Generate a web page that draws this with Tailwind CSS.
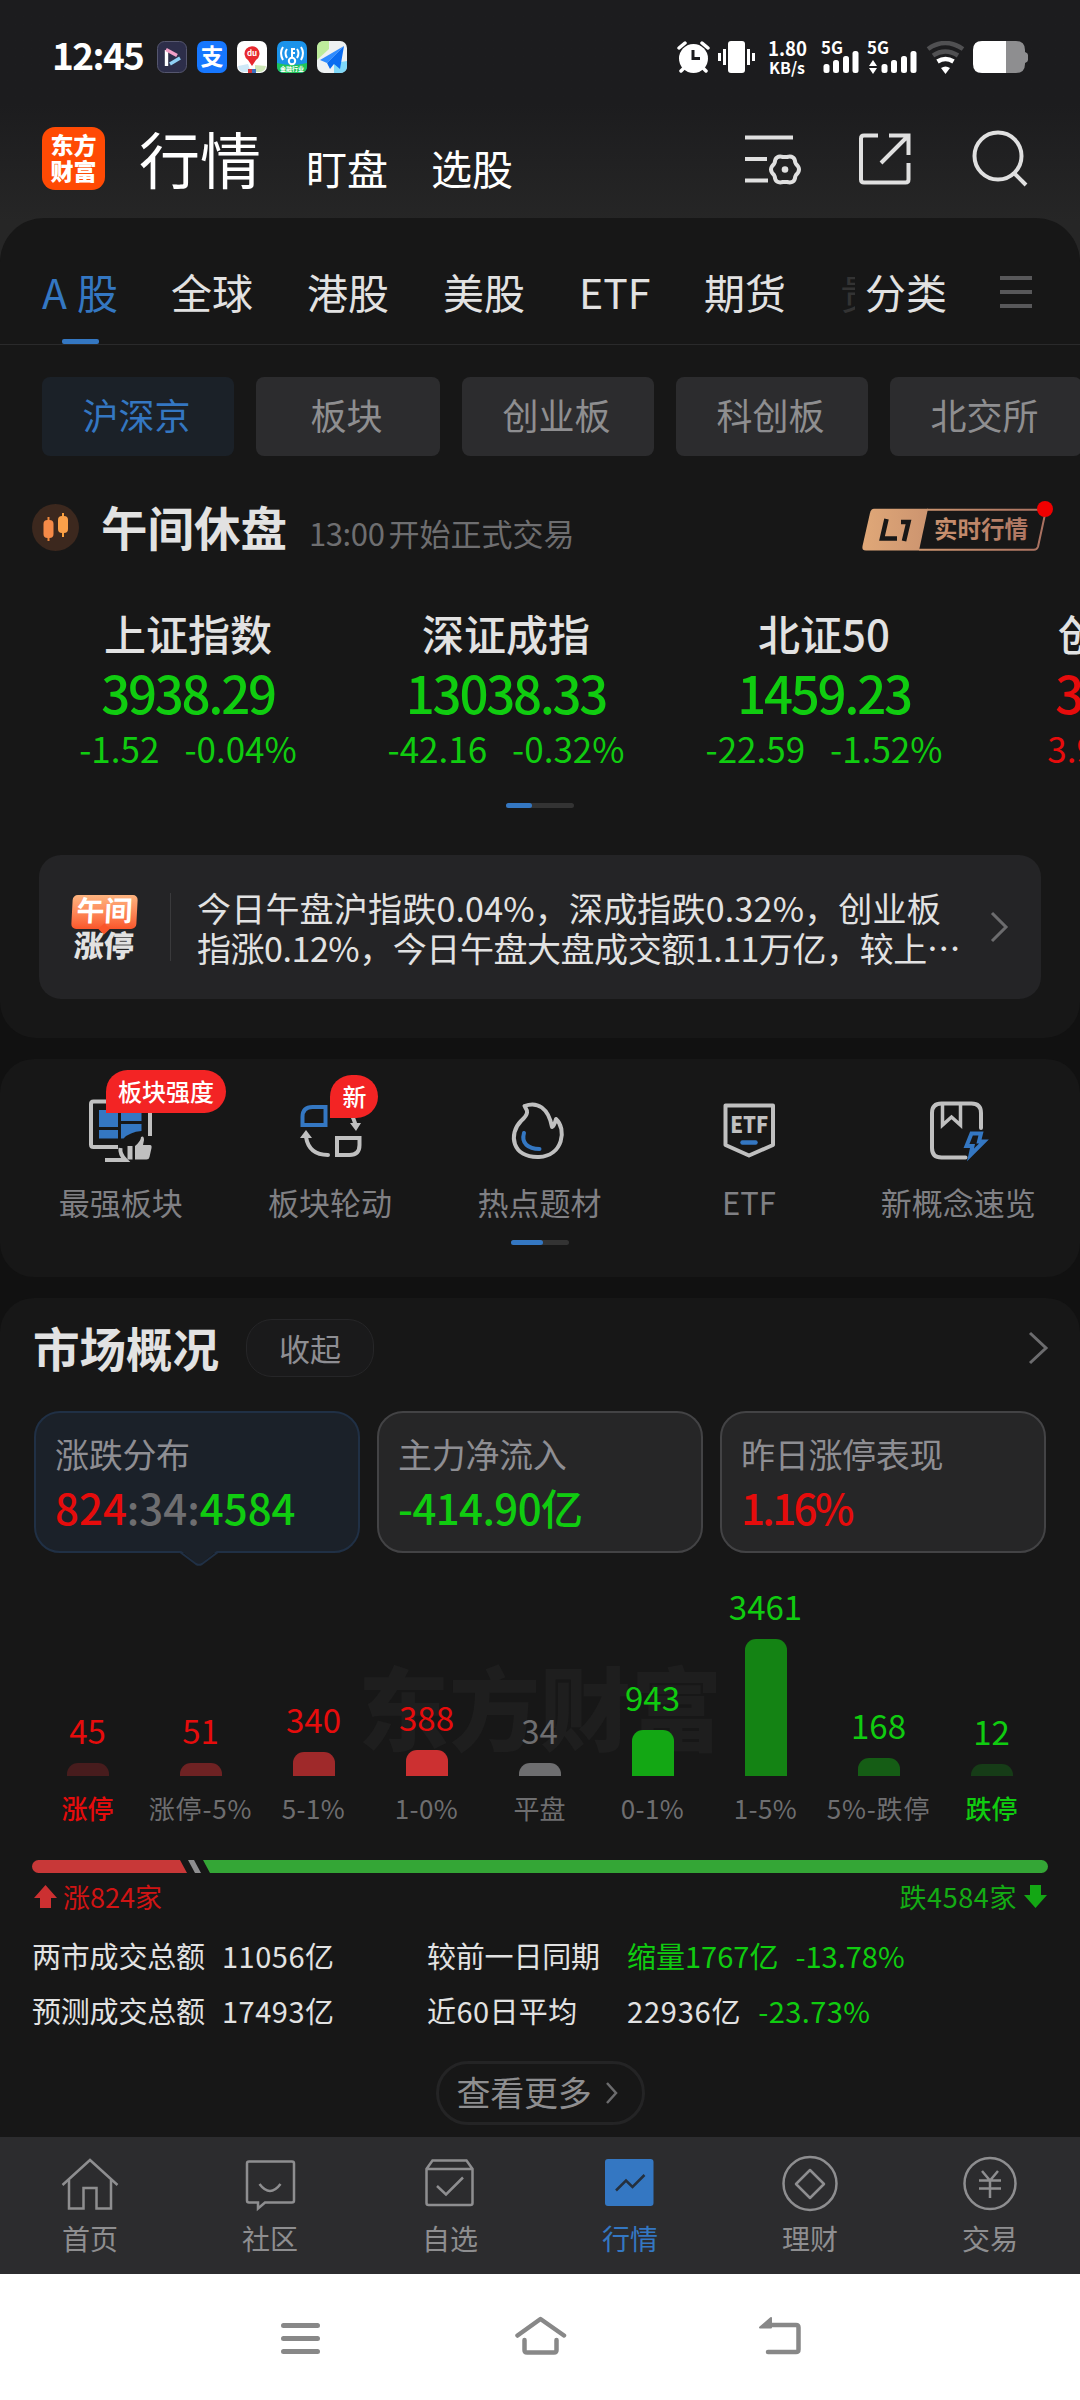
<!DOCTYPE html>
<html lang="zh-CN">
<head>
<meta charset="utf-8">
<title>行情</title>
<script src="https://cdn.jsdelivr.net/npm/@tailwindcss/browser@4"></script>
</head>
<body class="w-[1080px] h-[2400px] overflow-hidden bg-[#111111] font-['Noto_Sans_CJK_SC',sans-serif] leading-none whitespace-nowrap text-[#e2e2e2]">

<!-- Status bar and page header -->
<header class="h-[260px] -mb-[42px] pt-[41px] bg-linear-to-b from-[#1c1c1e] from-40% to-[#262626] to-85%">
  <div class="flex h-8 items-center pl-[52px] pr-[52px]">
    <span class="w-[96px] -mt-[5px] text-[37px] font-bold tracking-[-1.6px] text-white">12:45</span>
    <div class="ml-[9px] flex gap-[10px]">
      <svg class="w-[30px] h-8" viewBox="0 0 30 32"><rect x=".5" y=".5" width="29" height="31" rx="7" fill="#2d2e4a" stroke="#55566e"/><path d="M9.500 9v16" stroke="#fff" stroke-width="3.400"/><path d="M9 8.500l11 6" stroke="#f3a0c8" stroke-width="3.400"/><path d="M13 23l10-6" stroke="#8fd0f5" stroke-width="3.400"/></svg>
      <div class="w-[30px] h-8 rounded-[7px] bg-[#1677ff] flex items-center justify-center text-[23px] font-bold text-white pb-1">支</div>
      <svg class="w-[30px] h-8" viewBox="0 0 30 32"><rect width="30" height="32" rx="7" fill="#fff"/><path d="M1 25l10-2 3 8H7q-5 0-6-6z" fill="#cfe8f7"/><path d="M18 24l11 1q-1 6-7 6h-4z" fill="#cfe8b8"/><path d="M11 28h4v4h-4z" fill="#d8343a"/><path d="M15 28h4v4h-4z" fill="#3a6fc0"/><path d="M15 25l-4-6a7.500 7.500 0 1 1 8 0z" fill="#e8292f"/><text x="15" y="15" text-anchor="middle" font-size="8" font-weight="700" fill="#fff">du</text></svg>
      <svg class="w-[30px] h-8" viewBox="0 0 30 32"><rect width="30" height="32" rx="7" fill="#1b93ea"/><path d="M0 22q15 4 30 0v3q0 7-7 7H7q-7 0-7-7z" fill="#20c55a"/><circle cx="15" cy="20" r="3.200" fill="none" stroke="#fff" stroke-width="2"/><path d="M15 17V8h3M15 12h3M10 8q-3 4 0 9M6 6q-4 6 0 13M20 8q3 4 0 9M24 6q4 6 0 13" fill="none" stroke="#fff" stroke-width="2"/><text x="15" y="30" text-anchor="middle" font-size="6" font-weight="700" fill="#fff">金融行业</text></svg>
      <svg class="w-[30px] h-8" viewBox="0 0 30 32"><rect width="30" height="32" rx="7" fill="#eef1f2"/><path d="M7 0h5v8L0 19V7q0-7 7-7z" fill="#bdec9c"/><path d="M17 22l13-2v5q0 7-7 7h-6z" fill="#7fd8f8"/><path d="M27 5L3 19l7 3z" fill="#2f8cff"/><path d="M27 5L10 22l3 6 4-5 6 5z" fill="#0a6cf0"/></svg>
    </div>
    <svg class="ml-auto w-[351px] h-9 mt-1" viewBox="677 41 351 36" fill="#fff">
      <circle cx="693.500" cy="58.500" r="14.500"/><path d="M693 50v8.500h7" fill="none" stroke="#1c1c1e" stroke-width="3"/><path d="M679 48l6-5M708 48l-6-5M681 71l4-4M706 71l-4-4" stroke="#fff" stroke-width="3.500" stroke-linecap="round"/>
      <rect x="728" y="41" width="17" height="32" rx="3"/><path d="M724.500 49v16M719.500 53v8M748.500 49v16M753.500 53v8" stroke="#fff" stroke-width="3"/>
      <g font-weight="700"><text x="768" y="56" font-size="19.500" textLength="39" lengthAdjust="spacingAndGlyphs">1.80</text><text x="769" y="73.500" font-size="16" textLength="36" lengthAdjust="spacingAndGlyphs">KB/s</text>
      <text x="821" y="54" font-size="17" textLength="22" lengthAdjust="spacingAndGlyphs">5G</text><text x="867" y="54" font-size="17" textLength="22" lengthAdjust="spacingAndGlyphs">5G</text></g>
      <rect x="823.500" y="64" width="6" height="9" rx="2.500"/><rect x="833" y="60" width="6" height="13" rx="2.500"/><rect x="843" y="56" width="6" height="17" rx="2.500"/><rect x="852.500" y="51" width="6" height="22" rx="2.500"/>
      <path d="M869 66l4-6 4 6zM869 68h8l-4 6z"/>
      <rect x="881.500" y="64" width="6" height="9" rx="2.500"/><rect x="891" y="60" width="6" height="13" rx="2.500"/><rect x="901" y="56" width="6" height="17" rx="2.500"/><rect x="910.500" y="51" width="6" height="22" rx="2.500"/>
      <path d="M928 49q17-12 35 0M933 55.500q12-8 25 0" fill="none" stroke="#505052" stroke-width="4.500"/><path d="M937.500 61.500q8-5 16 0" fill="none" stroke="#fff" stroke-width="4.500"/><path d="M941 68q4.500-3 9 0l-4.500 6z"/>
      <path d="M1006 41h10q9 0 9 9v2q3 1 3 3v5q0 2-3 3v1q0 9-9 9h-10z" fill="#8e8e90"/><path d="M1006 41h-24q-9 0-9 9v14q0 9 9 9h24z"/>
    </svg>
  </div>
  <div class="mt-[54px] flex h-[63px] items-end pl-[42px] pr-[52px]">
    <div class="w-[63px] h-[63px] rounded-[13px] bg-[#ff4a04] flex flex-col items-center justify-center pb-[3px] text-[23px] leading-[26px] font-black text-white"><span>东方</span><span>财富</span></div>
    <span class="ml-[34px] mb-[2px] text-[61px] text-white">行情</span>
    <span class="ml-[45px] mb-[2px] text-[41px] text-white">盯盘</span>
    <span class="ml-[43px] mb-[2px] text-[41px] text-white">选股</span>
    <svg class="ml-auto w-[284px] h-[63px]" viewBox="744 127 284 63" fill="none" stroke="#e0e0e0" stroke-width="4">
      <path d="M745 137.500h48M745 159h22M745 180.500h23"/>
      <path stroke-linejoin="round" transform="translate(785 169.500)" d="M11-5.500Q17 0 11 5.500L10.300 7Q9.500 14.500 2 12.500H-2Q-9.500 14.500-10.300 7L-11 5.500Q-17 0-11-5.500L-10.300-7Q-9.500-14.500-2-12.500H2Q9.500-14.500 10.300-7z"/><circle cx="785" cy="169.500" r="3.300" fill="#e0e0e0" stroke="none"/>
      <path d="M878 135.500h-14q-3 0-3 3v41q0 3 3 3h41.500q3 0 3-3V163M889 135.500h19.500V155M881 163l26-26"/>
      <circle cx="998" cy="156" r="23.500"/><path d="M1014 173l12 12"/>
    </svg>
  </div>
</header>

<!-- Quotes -->
<section class="relative h-[820px] rounded-t-[44px] rounded-b-[36px] bg-[#171717] overflow-hidden">
  <nav class="relative flex h-[127px] border-b border-[#2a2a2b] pt-[53px] pl-[42px] text-[41px]">
    <div class="flex w-[76px] justify-between text-[41px] text-[#3477c2]"><span>A</span><span>股</span></div>
    <span class="ml-[53px]">全球</span><span class="ml-[54px]">港股</span><span class="ml-[54px]">美股</span><span class="ml-[54px] w-[71px]">ETF</span><span class="ml-[54px]">期货</span>
    <span class="ml-[54px] w-[15px] h-[50px] flex justify-start overflow-hidden text-[#333333]">贵</span>
    <span class="ml-[10px]">分类</span>
    <svg class="ml-[53px] mt-[3px] w-8 h-9" viewBox="0 0 32 36" stroke="#58585a" stroke-width="4"><path d="M0 4h32M0 18h32M0 32h32"/></svg>
    <i class="absolute left-[62px] bottom-0 w-[37px] h-[5px] rounded-[2px] bg-[#3477c2]"></i>
  </nav>
  <div class="mt-8 flex gap-[22px] pl-[42px] text-[36px] text-[#8e8e90] [&>span]:flex [&>span]:h-[79px] [&>span]:shrink-0 [&>span]:items-center [&>span]:justify-center [&>span]:rounded-lg [&>span]:pb-[5px] [&>span]:pr-[3px]">
    <span class="w-[192px] bg-[#1b2128] text-[#3477c2]">沪深京</span><span class="w-[184px] bg-[#2c2c2e]">板块</span><span class="w-[192px] bg-[#2c2c2e]">创业板</span><span class="w-[192px] bg-[#2c2c2e]">科创板</span><span class="w-[192px] bg-[#2c2c2e]">北交所</span>
  </div>
  <div class="mt-[44px] flex h-14 items-center pl-8 pr-[30px]">
    <svg class="w-[47px] h-[47px] -mt-px" viewBox="0 0 47 47"><circle cx="23.500" cy="23.500" r="23.500" fill="#3c281e"/><path d="M16.500 13v24" stroke="#f0883c" stroke-width="2"/><rect x="11.500" y="16" width="10" height="18" rx="4" fill="#f58a48"/><path d="M31 9v24" stroke="#fba03c" stroke-width="2"/><rect x="26" y="12" width="10" height="17" rx="4" fill="#faa04a"/></svg>
    <span class="ml-[22px] -mt-[3px] text-[46.500px] font-bold">午间休盘</span>
    <span class="ml-[22px] mt-[9px] text-[31px] text-[#6e6e70]"><span class="tracking-[-0.4px]">13:00</span><span class="ml-1">开始正式交易</span></span>
    <svg class="ml-auto w-[190px] h-14 overflow-visible" viewBox="860 498 190 56">
      <defs><linearGradient id="l1" x1="862" x2="1047" y1="0" y2="0" gradientUnits="userSpaceOnUse"><stop stop-color="#e0a878"/><stop offset="1" stop-color="#a87060"/></linearGradient></defs>
      <path d="M874 506.700h54l-9 41.800h-53q-4.500 0-3.500-4.500l7.500-33q1-4.300 4-4.300z" fill="url(#l1)"/>
      <path d="M927 507.700h119l-8 37q-1 3-4 3H919" fill="none" stroke="url(#l1)" stroke-width="2"/>
      <path d="M886.500 517l-4.500 19.500h15M901 520h7.500l-4.500 19" fill="none" stroke="#171717" stroke-width="4.600"/>
      <text x="934" y="536" font-size="23.500" font-weight="700" fill="url(#l1)">实时行情</text>
      <circle cx="1045" cy="507" r="8" fill="#f00000"/>
    </svg>
  </div>
  <div class="mt-[56px] flex pl-[29px] [&>div]:flex [&>div]:w-[318px] [&>div]:shrink-0 [&>div]:flex-col [&>div]:items-center [&_b]:text-[42px] [&_b]:font-medium [&_strong]:mt-[13px] [&_strong]:text-[51px] [&_strong]:font-medium [&_strong]:tracking-[-2.3px] [&_p]:mt-3 [&_p]:flex [&_p]:gap-[25px] [&_p]:text-[35px] text-[#10cc10]">
    <div><b class="text-[#e2e2e2]">上证指数</b><strong>3938.29</strong><p><span>-1.52</span><span>-0.04%</span></p></div>
    <div><b class="text-[#e2e2e2]">深证成指</b><strong>13038.33</strong><p><span>-42.16</span><span>-0.32%</span></p></div>
    <div><b class="text-[#e2e2e2]">北证50</b><strong>1459.23</strong><p><span>-22.59</span><span>-1.52%</span></p></div>
    <div class="text-[#e60c0c]"><b class="text-[#e2e2e2]">创业板指</b><strong>3801.24</strong><p class="pl-1"><span>3.92</span><span>0.12%</span></p></div>
  </div>
  <div class="mx-auto mt-[38px] flex h-[5px] w-[68px] rounded-full bg-[#333333]"><i class="w-[26px] rounded-full bg-[#3477c2]"></i></div>
  <div class="mx-[39px] mt-[47px] flex h-[144px] items-center rounded-[22px] bg-[#242426]">
    <div class="ml-[31px] flex w-[68px] flex-col items-center">
      <div class="relative h-[34px] w-[65px] -skew-x-3 rounded-[5px] bg-linear-to-b from-[#fdb480] to-[#f9552a] text-center text-[28px] font-bold text-white">午间<i class="absolute left-[29px] -bottom-1 size-2 rotate-45 bg-[#f9552a]"></i></div>
      <span class="relative -skew-x-3 text-[30px] font-black">涨停</span>
    </div>
    <i class="ml-8 h-[68px] w-px bg-[#3a3a3c]"></i>
    <p class="ml-[26px] pt-px text-[34px] leading-[40px]"><span class="tracking-[0.2px]">今日午盘沪指跌0.04%，深成指跌0.32%，创业板</span><br><span class="tracking-[-0.45px]">指涨0.12%，今日午盘大盘成交额1.11万亿，较上…</span></p>
    <svg class="ml-auto mr-[32px] h-8 w-[19px]" viewBox="0 0 19 32" fill="none" stroke="#6c6c6e" stroke-width="3"><path d="M2 2l14 14L2 30"/></svg>
  </div>
</section>

<!-- Shortcuts -->
<section class="mt-[21px] h-[218px] rounded-[34px] bg-[#171717] pt-[39px]">
  <div class="ml-4 grid w-[1047px] grid-cols-5 text-[31px] text-[#808084] [&>div]:relative [&>div]:flex [&>div]:flex-col [&>div]:items-center [&>div]:gap-[24px]">
    <div>
      <svg class="h-16 w-[70px]" viewBox="86 1098 70 64"><path d="M118 1147H93.500q-2.500 0-2.500-2.500V1104q0-2.500 2.500-2.500h54q2.500 0 2.500 2.500v32" fill="none" stroke="#c0c0c0" stroke-width="4"/><path d="M99 1110h19v17H99zM121 1110h20.500v11H121zM99 1130h19v8.500H99zM121 1124h20.500v7q-12 1-18 7.500H121z" fill="#3477c2"/><path d="M105 1160h20.500q-6-6-5-12" fill="none" stroke="#c0c0c0" stroke-width="4"/><path d="M127.500 1146h5v13.500h-5zM135 1146q6-5 6-9 3-2 3 3l-1 5h7q2 0 1.500 3l-2 9q-.5 2.500-3 2.500H135z" fill="#c0c0c0"/></svg>
      <span>最强板块</span>
      <b class="absolute left-[90px] -top-[28px] flex h-[43px] w-[120px] items-center justify-center rounded-[22px] rounded-bl-none bg-[#f32424] pb-[1px] text-[24px] font-medium text-white">板块强度</b>
    </div>
    <div>
      <svg class="h-16 w-[70px]" viewBox="296 1098 70 64" fill="none" stroke-width="4"><path d="M303.500 1125v-8q0-10 10-10h13v18z" stroke="#3477c2"/><path d="M338 1138h22.500v7q0 10-10 10H338z" stroke="#c0c0c0"/><path d="M307 1137q3 18 22 18M344 1108q9 4 12 15" stroke="#c0c0c0" stroke-linecap="round"/><path d="M301 1138l6-8 6 8zM351 1123h11l-5 8z" fill="#c0c0c0"/></svg>
      <span>板块轮动</span>
      <b class="absolute left-[105px] -top-[23px] flex h-[43px] w-[48px] items-center justify-center rounded-[24px] rounded-bl-none bg-[#f32424] pb-[1px] text-[24px] font-medium text-white">新</b>
    </div>
    <div>
      <svg class="h-16 w-[70px]" viewBox="505 1098 70 64" fill="none" stroke-width="4" stroke-linecap="round" stroke-linejoin="round"><path d="M525.500 1106c13-5 24 2 27.500 21 2-1 3-4 4-8 11 10 7 37-17 38-27 1-31-23-18-36 9-8 6-11 3.500-15z" stroke="#c0c0c0"/><path d="M525 1133c-3 10 4 16 15.500 16" stroke="#3477c2"/></svg>
      <span>热点题材</span>
    </div>
    <div>
      <svg class="h-16 w-[70px]" viewBox="714.500 1098 70 64" fill="none" stroke-width="4" stroke-linejoin="round"><path d="M726 1105.500h47.500v39.500l-24 10.500L726 1145z" stroke="#c0c0c0"/><path d="M743 1142.500h13" stroke="#3477c2" stroke-width="4.500" stroke-linecap="round"/><text x="749.700" y="1133" text-anchor="middle" font-size="22.500" font-weight="900" fill="#c0c0c0" textLength="38" lengthAdjust="spacingAndGlyphs">ETF</text></svg>
      <span>ETF</span>
    </div>
    <div>
      <svg class="h-16 w-[70px]" viewBox="924.500 1098 70 64" fill="none" stroke-width="4" stroke-linecap="round"><path d="M982.500 1128v-15q0-9.500-9.500-9.500h-30q-9.500 0-9.500 9.500v35q0 9.500 9.500 9.500h24" stroke="#c0c0c0"/><path d="M944 1104v21l9-8 9 8v-21" stroke="#c0c0c0" stroke-width="3.500"/><path d="M973 1133.500h9.500l-2 8h5L972 1155l2-9h-6z" stroke="#3477c2"/></svg>
      <span>新概念速览</span>
    </div>
  </div>
  <div class="mx-auto mt-[23px] flex h-[5px] w-[58px] rounded-full bg-[#333333]"><i class="w-8 rounded-full bg-[#3477c2]"></i></div>
</section>

<!-- Market overview -->
<section class="mt-[21px] h-[839px] rounded-t-[34px] bg-[#171717] pt-[21px]">
  <div class="flex h-[58px] items-center pl-[33px] pr-[31px]">
    <h2 class="-mt-[2px] text-[46.500px] font-bold">市场概况</h2>
    <span class="ml-[27px] flex h-[58px] w-[128px] items-center justify-center rounded-[26px] border border-[#262628] bg-[#1a1a1b] pb-[2px] text-[31px] text-[#8e8e93]">收起</span>
    <svg class="ml-auto h-[34px] w-[21px]" viewBox="0 0 21 34" fill="none" stroke="#6c6c6e" stroke-width="3"><path d="M2 2l16 15L2 32"/></svg>
  </div>
  <div class="mx-[34px] mt-[34px] grid h-[142px] grid-cols-3 gap-[17px] [&>div]:relative [&>div]:rounded-[26px] [&>div]:border-2 [&>div]:pt-[24px] [&>div]:pl-[19px] [&_p]:text-[34px] [&_p]:tracking-[-0.3px] [&_p]:text-[#8e8e93] [&_strong]:mt-[15px] [&_strong]:flex [&_strong]:text-[42px] [&_strong]:font-medium">
    <div class="border-[#203045] bg-[#1b2129]"><p>涨跌分布</p><strong class="text-[#6e6e70]"><span class="text-[#e60c0c]">824</span>:34:<span class="text-[#10cc10]">4584</span></strong>
      <svg class="absolute -bottom-[15px] left-[143px] h-[16px] w-10" viewBox="0 0 40 16"><path d="M0 0l3 1.500L17 13q3 2 6 0L37 1.500 40 0" fill="#1b2129"/><path d="M1 2l16 12q3 1.500 6 0L39 2" fill="none" stroke="#203045" stroke-width="2"/></svg></div>
    <div class="border-[#434345] bg-[#262627]"><p>主力净流入</p><strong class="tracking-[-0.6px] text-[#10cc10]">-414.90亿</strong></div>
    <div class="border-[#434345] bg-[#262627]"><p>昨日涨停表现</p><strong class="tracking-[-2.6px] text-[#e60c0c]">1.16%</strong></div>
  </div>

  <div class="relative">
    <div class="absolute left-[358px] top-[106px] text-[91px] font-black text-[#1e1e1e]">东方财富</div>
    <div class="relative ml-[31px] flex h-[223px] items-end text-[33px] [&>div]:flex [&>div]:w-[113px] [&>div]:flex-col [&>div]:items-center [&>div]:gap-[16px] [&_i]:w-[42px] [&_i]:rounded-t-[11px]">
      <div class="text-[#e60c0c]">45<i class="bg-[#471c1d]" style="height:13px"></i></div>
      <div class="text-[#e60c0c]">51<i class="bg-[#6e2223]" style="height:13px"></i></div>
      <div class="text-[#e60c0c]">340<i class="bg-[#9f292a]" style="height:24px"></i></div>
      <div class="text-[#e60c0c]">388<i class="bg-[#cc3031]" style="height:26px"></i></div>
      <div class="text-[#6e6e70]">34<i class="bg-[#6e6e70]" style="height:13px"></i></div>
      <div class="text-[#10cc10]">943<i class="bg-[#13a714]" style="height:46px"></i></div>
      <div class="text-[#10cc10]">3461<i class="bg-[#148314]" style="height:137px"></i></div>
      <div class="text-[#10cc10]">168<i class="bg-[#155d15]" style="height:18px"></i></div>
      <div class="text-[#10cc10]">12<i class="bg-[#163c17]" style="height:12px"></i></div>
    </div>
    <div class="ml-[31px] mt-[19px] flex text-[26px] text-[#6e6e70] [&>span]:flex [&>span]:w-[113px] [&>span]:justify-center">
      <span class="text-[#e60c0c] font-medium">涨停</span><span class="tracking-[0.8px]">涨停-5%</span><span class="tracking-[0.4px]">5-1%</span><span class="tracking-[0.4px]">1-0%</span><span>平盘</span><span class="tracking-[0.4px]">0-1%</span><span class="tracking-[0.4px]">1-5%</span><span class="tracking-[0.8px]">5%-跌停</span><span class="text-[#10cc10] font-medium">跌停</span>
    </div>
  </div>

  <svg class="ml-8 mt-[39px] h-[13px] w-[1016px]" viewBox="32 0 1016 13"><path d="M38.500 0H180l7 13H38.500a6.500 6.500 0 0 1 0-13z" fill="#c83838"/><path d="M188 0h6l7 13h-6z" fill="#8e8e90"/><path d="M203 0h838.500a6.500 6.500 0 0 1 0 13H210z" fill="#34a636"/></svg>
  <div class="mt-[10px] flex items-center pl-[34px] pr-[33px] text-[27px]">
    <svg class="w-[23px] h-6" viewBox="0 0 23 24"><path d="M11.500 0L23 13h-6v10H6V13H0z" fill="#cc3031"/></svg><span class="ml-[6px] text-[#d01414]">涨824家</span>
    <span class="ml-auto mr-[7px] tracking-[0.6px] text-[#14ac14]">跌4584家</span><svg class="w-[23px] h-6" viewBox="0 0 23 24"><path d="M11.500 23L0 10h6V0h11v10h6z" fill="#13a714"/></svg>
  </div>
  <div class="ml-[32px] mt-[31px] grid grid-cols-[190px_205px_200px_auto] gap-y-[26px] text-[29px] [&>span:nth-child(4n)]:flex [&>span:nth-child(4n)]:gap-[17px]">
    <span class="tracking-[-0.2px]">两市成交总额</span><span class="tracking-[0.5px]">11056亿</span><span class="tracking-[-0.2px]">较前一日同期</span><span class="text-[#10cc10]"><span>缩量1767亿</span><span>-13.78%</span></span>
    <span class="tracking-[-0.2px]">预测成交总额</span><span class="tracking-[0.5px]">17493亿</span><span class="tracking-[0.4px]">近60日平均</span><span><span class="tracking-[0.8px]">22936亿</span><span class="tracking-[0.4px] text-[#10cc10]">-23.73%</span></span>
  </div>
  <div class="mx-auto mt-[36px] flex h-[64px] w-[209px] items-center justify-center gap-[14px] rounded-full border-3 border-[#242425] pr-1 text-[34px] tracking-[-0.3px] text-[#8e8e90]"><span class="-mt-[2px]">查看更多</span><svg class="h-[22px] w-[14px]" viewBox="0 0 14 22" fill="none" stroke="#6c6c6e" stroke-width="2.500"><path d="M2 1l9 10-9 10"/></svg></div>
</section>

<!-- Bottom tabs -->
<nav class="grid h-[137px] grid-cols-6 bg-[#2c2c2e] pt-[17px] text-[28px] text-[#8e8e90] [&>div]:flex [&>div]:flex-col [&>div]:items-center [&>div]:gap-[10px]">
  <div><svg class="size-[60px]" viewBox="60 2154 60 60" fill="none" stroke="#8e8e90" stroke-width="2.500"><path d="M62.500 2185L90 2160l27.500 25M69 2180v28.500h14.500V2188h13v20.500H111V2180"/></svg>首页</div>
  <div><svg class="size-[60px]" viewBox="240 2154 60 60" fill="none" stroke="#8e8e90" stroke-width="2.500"><path d="M249 2161.500h43q2 0 2 2v37q0 2-2 2h-27l-7 6v-6h-9q-2 0-2-2v-37q0-2 2-2zM259.500 2184q10.500 14 21 0"/></svg>社区</div>
  <div><svg class="size-[60px]" viewBox="420 2154 60 60" fill="none" stroke="#8e8e90" stroke-width="2.500"><path d="M426.500 2169v34q0 2 2 2h42q2 0 2-2v-34l-6-8.500h-34zM426.500 2169h46M437 2186l9 8.500 17-17"/></svg>自选</div>
  <div class="text-[#3477c2]"><svg class="size-[60px]" viewBox="600 2154 60 60"><rect x="605" y="2159" width="48.500" height="47" rx="3" fill="#3477c2"/><path d="M616 2190.500l10-10 6.500 6.500 12-12" fill="none" stroke="#25303e" stroke-width="2.500"/></svg>行情</div>
  <div><svg class="size-[60px]" viewBox="780 2154 60 60" fill="none" stroke="#8e8e90" stroke-width="2.500"><circle cx="810" cy="2183.500" r="26.500"/><path d="M810 2170l14 14-14 14-14-14z" stroke-linejoin="round"/></svg>理财</div>
  <div><svg class="size-[60px]" viewBox="960 2154 60 60" fill="none" stroke="#8e8e90" stroke-width="2.500"><circle cx="990" cy="2183.500" r="25.500"/><path d="M982 2171l8 9.500 8-9.500M979 2180.500h22M979 2188.500h22M990 2180v18"/></svg>交易</div>
</nav>

<!-- System navigation -->
<footer class="flex h-[126px] items-center gap-[193px] bg-white pb-[3px] pl-[280px]">
  <svg class="h-10 w-[42px]" viewBox="280 2315 42 40" stroke="#888888" stroke-width="5" stroke-linecap="round"><path d="M283.500 2324.500h34M283.500 2337.500h34M283.500 2350.500h34"/></svg>
  <svg class="h-10 w-[52px]" viewBox="515 2315 52 40" fill="none" stroke="#888888" stroke-width="4.500" stroke-linecap="round" stroke-linejoin="round"><path d="M517.500 2334.500L540.500 2318l23.500 16.500M524.500 2339v10q0 2.500 2.500 2.500h27q2.500 0 2.500-2.500v-10"/></svg>
  <svg class="h-10 w-[44px] -ml-[2px]" viewBox="759 2315 44 40" fill="none" stroke="#888888" stroke-width="4.500" stroke-linecap="round"><path d="M769 2324h28q2.500 0 2.500 2.500v22q0 2.500-2.500 2.500h-28"/><path d="M772 2317v9.500h-11z" fill="#888888" stroke-width="2" stroke-linejoin="round"/></svg>
</footer>
</body>
</html>
